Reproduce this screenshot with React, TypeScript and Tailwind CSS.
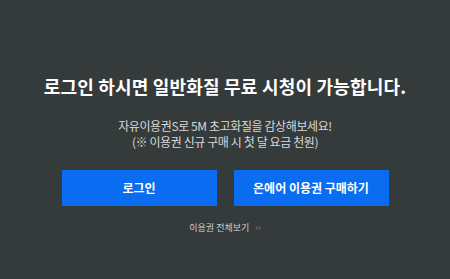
import React from 'react';

const font = { fontFamily: '"Noto Sans CJK KR", "Noto Sans", sans-serif' };

export default function App() {
  return (
    <div
      className="flex h-[279px] w-full flex-col items-center bg-[#353a3a] pt-[74px]"
      style={font}
    >
      <h1 className="text-[18px] font-bold leading-[24px] tracking-[0.2px] text-white">
        로그인 하시면 일반화질 무료 시청이 가능합니다.
      </h1>

      <div className="mt-[20px] flex flex-col items-center text-[12px] leading-[16px] tracking-[-0.4px] text-[#d9d9d9]">
        <p>자유이용권S로 5M 초고화질을 감상해보세요!</p>
        <p>(※ 이용권 신규 구매 시 첫 달 요금 천원)</p>
      </div>

      <div className="mt-[20px] flex gap-[17px]">
        <button className="h-[36px] w-[155px] bg-[#0a6cf0] text-[12px] font-bold text-white">
          로그인
        </button>
        <button className="h-[36px] w-[155px] bg-[#0a6cf0] text-[12px] font-bold text-white">
          온에어 이용권 구매하기
        </button>
      </div>

      <a className="mt-[15px] flex items-center gap-[6px] text-[9px] leading-[14px] text-[#d0d0d0]">
        이용권 전체보기
        <span className="text-[9px] text-[#8a8a8a]">››</span>
      </a>
    </div>
  );
}
